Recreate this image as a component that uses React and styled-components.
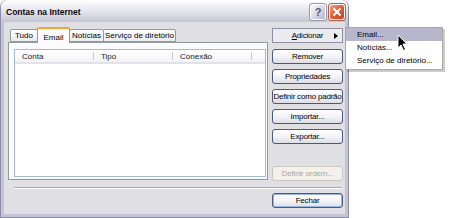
import styled, { createGlobalStyle } from "styled-components";

const GlobalStyle = createGlobalStyle`
  html, body { margin: 0; padding: 0; background: #fff; }
  body {
    font-family: "Liberation Sans", Arial, sans-serif;
    font-size: 8px;
    color: #000;
  }
  * { box-sizing: border-box; }
`;

const Stage = styled.div`
  position: relative;
  width: 450px;
  height: 218px;
  overflow: hidden;
`;

const Window = styled.div`
  width: 349px;
  height: 218px;
  display: flex;
  flex-direction: column;
  background: #c4c3d6;
  border: 1px solid #8d8ca6;
  border-top: none;
  border-radius: 7px 7px 0 0;
  padding: 0 3px 3px;
`;

const TitleBar = styled.div`
  height: 22px;
  margin: 0 -3px;
  display: flex;
  align-items: center;
  justify-content: space-between;
  padding: 0 3px 0 5px;
  border-radius: 7px 7px 0 0;
  border-top: 1px solid #ffffff;
  background: linear-gradient(#fdfdfe 0%, #eaeaf0 35%, #d8d8e2 70%, #c5c4d6 100%);
`;

const Title = styled.span`
  font-weight: bold;
  font-size: 8.5px;
  color: #0a0a14;
`;

const Caption = styled.div`
  display: flex;
  gap: 3px;
`;

const CapButton = styled.div`
  width: 16px;
  height: 16px;
  border-radius: 3px;
  border: 1px solid #ffffff;
  display: flex;
  align-items: center;
  justify-content: center;
  color: #56586f;
  font-weight: bold;
  font-size: 11px;
  background: ${(p) =>
    p.$close
      ? "linear-gradient(135deg, #f2a58c 0%, #e3603f 45%, #c8401f 100%)"
      : "linear-gradient(135deg, #fbfbfd 0%, #d9d9e6 50%, #b6b5cc 100%)"};
  box-shadow: 0 0 0 1px ${(p) => (p.$close ? "#b85a45" : "#9a99b2")};
`;

const Client = styled.div`
  flex: 1;
  display: flex;
  flex-direction: column;
  background: #e0dfe3;
  padding: 4px 2px 0 4px;
`;

const MainRow = styled.div`
  height: 155px;
  display: flex;
  gap: 4px;
`;

const TabColumn = styled.div`
  width: 260px;
  display: flex;
  flex-direction: column;
  padding-bottom: 1px;
`;

const TabStrip = styled.div`
  height: 16px;
  display: flex;
  align-items: flex-end;
  padding-left: 2px;
  position: relative;
  z-index: 1;
`;

const Tab = styled.div`
  width: ${(p) => p.$w}px;
  height: ${(p) => (p.$active ? 16 : 13)}px;
  margin-bottom: ${(p) => (p.$active ? -1 : 0)}px;
  display: flex;
  align-items: center;
  justify-content: center;
  padding-top: ${(p) => (p.$active ? 2 : 0)}px;
  border: 1px solid #919b9c;
  border-bottom: ${(p) => (p.$active ? "none" : "1px solid #919b9c")};
  border-top: ${(p) => (p.$active ? "2px solid #f5a337" : "1px solid #919b9c")};
  border-radius: 2px 2px 0 0;
  background: ${(p) =>
    p.$active ? "#fcfcfe" : "linear-gradient(#ffffff, #ecebf0)"};
  & + & {
    margin-left: -1px;
  }
`;

const Pane = styled.div`
  flex: 1;
  display: flex;
  border: 1px solid #919b9c;
  background: #fcfcfe;
  padding: 6px 1px 2px 5px;
`;

const List = styled.div`
  flex: 1;
  border: 1px solid #a5b9d2;
  background: #fff;
`;

const ListHeader = styled.div`
  height: 14px;
  display: flex;
  background: linear-gradient(#ffffff, #f3f3f6);
  border-bottom: 2px solid #e2e2ea;
`;

const Column = styled.div`
  width: 79px;
  display: flex;
  align-items: center;
  padding-left: 7px;
  position: relative;
  color: #222;
  &::after {
    content: "";
    position: absolute;
    right: 0;
    top: 2px;
    bottom: 2px;
    width: 1px;
    background: #c7c6d2;
  }
`;

const ButtonColumn = styled.div`
  width: 71px;
  display: flex;
  flex-direction: column;
  gap: 5px;
  padding-top: 2px;
`;

const Button = styled.div`
  height: 15px;
  display: flex;
  align-items: center;
  justify-content: center;
  border: 1px solid ${(p) => (p.$disabled ? "#cac8bb" : "#4a5a7c")};
  border-radius: 3px;
  letter-spacing: -0.2px;
  white-space: nowrap;
  color: ${(p) => (p.$disabled ? "#aca899" : "#000")};
  background: ${(p) =>
    p.$disabled ? "#f2f1ee" : "linear-gradient(#ffffff 0%, #f4f4f8 50%, #dddde6 100%)"};
  box-shadow: ${(p) => (p.$default ? "inset 0 0 0 1px #9cb6e2" : "none")};
  margin-top: ${(p) => (p.$bottom ? "auto" : "0")};
`;

const MenuButton = styled(Button)`
  border-radius: 0;
  border-color: #8f8ea2;
  background: #ecebf0;
  margin-bottom: 1px;
  position: relative;
  u { text-decoration: underline; }
  &::after {
    content: "";
    position: absolute;
    right: 4px;
    top: 4px;
    border-left: 4px solid #000;
    border-top: 3.5px solid transparent;
    border-bottom: 3.5px solid transparent;
  }
`;

const Separator = styled.div`
  height: 2px;
  margin: 6px 1px 0 6px;
  border-top: 1px solid #a9a8b4;
  border-bottom: 1px solid #ffffff;
`;

const Footer = styled.div`
  display: flex;
  justify-content: flex-end;
  padding-top: 4px;
`;

const FooterButton = styled(Button)`
  width: 71px;
`;

const Menu = styled.div`
  position: absolute;
  left: 345px;
  top: 27px;
  width: 98px;
  background: #fff;
  border: 1px solid #aca8a0;
  padding-bottom: 2px;
  box-shadow: 2px 2px 0 rgba(0, 0, 0, 0.2);
`;

const MenuItem = styled.div`
  height: 13px;
  display: flex;
  align-items: center;
  padding-left: 11px;
  background: ${(p) => (p.$hover ? "#b7b6cb" : "transparent")};
`;

const Cursor = styled.svg`
  position: absolute;
  left: 397px;
  top: 34px;
`;

export default function App() {
  return (
    <Stage>
      <GlobalStyle />
      <Window>
        <TitleBar>
          <Title>Contas na Internet</Title>
          <Caption>
            <CapButton>?</CapButton>
            <CapButton $close>
              <svg width="10" height="10" viewBox="0 0 10 10">
                <path d="M1.5 1.5 L8.5 8.5 M8.5 1.5 L1.5 8.5" stroke="#fff" strokeWidth="2" />
              </svg>
            </CapButton>
          </Caption>
        </TitleBar>
        <Client>
          <MainRow>
            <TabColumn>
              <TabStrip>
                <Tab $w={28}>Tudo</Tab>
                <Tab $w={33} $active>Email</Tab>
                <Tab $w={35}>Notícias</Tab>
                <Tab $w={73}>Serviço de diretório</Tab>
              </TabStrip>
              <Pane>
                <List>
                  <ListHeader>
                    <Column>Conta</Column>
                    <Column>Tipo</Column>
                    <Column>Conexão</Column>
                  </ListHeader>
                </List>
              </Pane>
            </TabColumn>
            <ButtonColumn>
              <MenuButton>
                <span>
                  <u>A</u>dicionar
                </span>
              </MenuButton>
              <Button>Remover</Button>
              <Button>Propriedades</Button>
              <Button>Definir como padrão</Button>
              <Button>Importar...</Button>
              <Button>Exportar...</Button>
              <Button $disabled $bottom>Definir ordem...</Button>
            </ButtonColumn>
          </MainRow>
          <Separator />
          <Footer>
            <FooterButton $default>Fechar</FooterButton>
          </Footer>
        </Client>
      </Window>
      <Menu>
        <MenuItem $hover>Email...</MenuItem>
        <MenuItem>Notícias...</MenuItem>
        <MenuItem>Serviço de diretório...</MenuItem>
      </Menu>
      <Cursor width="12" height="18" viewBox="0 0 12 18">
        <path
          d="M1 1 L1 14 L4 11 L6.5 16.5 L8.5 15.5 L6 10 L10 10 Z"
          fill="#000"
          stroke="#fff"
          strokeWidth="1"
        />
      </Cursor>
    </Stage>
  );
}
